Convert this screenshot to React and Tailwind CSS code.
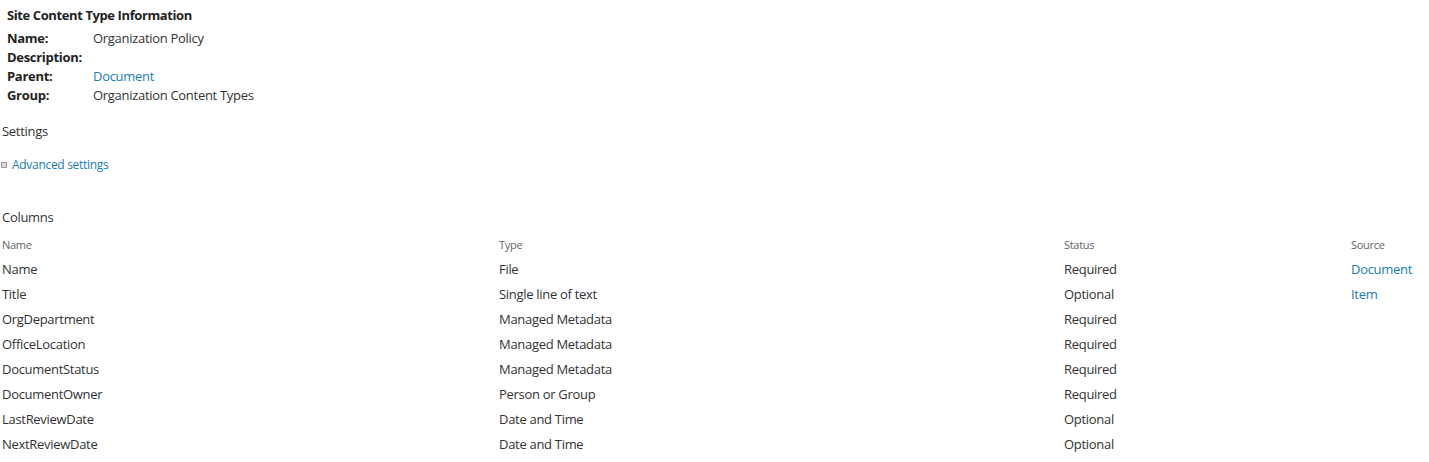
const info = [
  { label: 'Name:', value: 'Organization Policy' },
  { label: 'Description:', value: '' },
  { label: 'Parent:', value: 'Document', link: true },
  { label: 'Group:', value: 'Organization Content Types' },
];

const columns = [
  { name: 'Name', type: 'File', status: 'Required', source: 'Document' },
  { name: 'Title', type: 'Single line of text', status: 'Optional', source: 'Item' },
  { name: 'OrgDepartment', type: 'Managed Metadata', status: 'Required' },
  { name: 'OfficeLocation', type: 'Managed Metadata', status: 'Required' },
  { name: 'DocumentStatus', type: 'Managed Metadata', status: 'Required' },
  { name: 'DocumentOwner', type: 'Person or Group', status: 'Required' },
  { name: 'LastReviewDate', type: 'Date and Time', status: 'Optional' },
  { name: 'NextReviewDate', type: 'Date and Time', status: 'Optional' },
];

const App = () => {
  return (
    <div className="w-[1429px] h-[462px] bg-white overflow-hidden text-[13px] text-[#333] font-['Open_Sans',sans-serif] tracking-[-0.3px]">
      <section className="pl-[7px] pt-[6px]">
        <h2 className="font-bold text-[#222] leading-[19px] tracking-[-0.4px]">Site Content Type Information</h2>
        <div className="mt-[4px]">
          {info.map((row) => (
            <div key={row.label} className="flex leading-[19px]">
              <div className="w-[86px] font-bold text-[#222]">{row.label}</div>
              <div className={row.link ? 'text-[#1a7db3]' : ''}>{row.value}</div>
            </div>
          ))}
        </div>
      </section>

      <div className="pl-[2px] mt-[17px] leading-[19px] text-[#333]">Settings</div>

      <div className="flex items-center pl-[1px] mt-[14px] leading-[19px]">
        <span className="w-[6px] h-[6px] border border-[#999] bg-[#ddd] mr-[5px]" />
        <span className="text-[#1a7db3] text-[12px]">Advanced settings</span>
      </div>

      <div className="pl-[2px] mt-[34px] leading-[19px]">Columns</div>

      <div className="grid grid-cols-[497px_565px_287px_1fr] pl-[2px] mt-[8px]">
        <div className="text-[11px] text-[#666] leading-[19px] pb-[3px]">Name</div>
        <div className="text-[11px] text-[#666] leading-[19px] pb-[3px]">Type</div>
        <div className="text-[11px] text-[#666] leading-[19px] pb-[3px]">Status</div>
        <div className="text-[11px] text-[#666] leading-[19px] pb-[3px]">Source</div>
        {columns.map((c) => (
          <div key={c.name} className="contents">
            <div className="leading-[25px]">{c.name}</div>
            <div className="leading-[25px]">{c.type}</div>
            <div className="leading-[25px]">{c.status}</div>
            <div className="leading-[25px] text-[#1a7db3]">{c.source}</div>
          </div>
        ))}
      </div>
    </div>
  );
};

export default App;
